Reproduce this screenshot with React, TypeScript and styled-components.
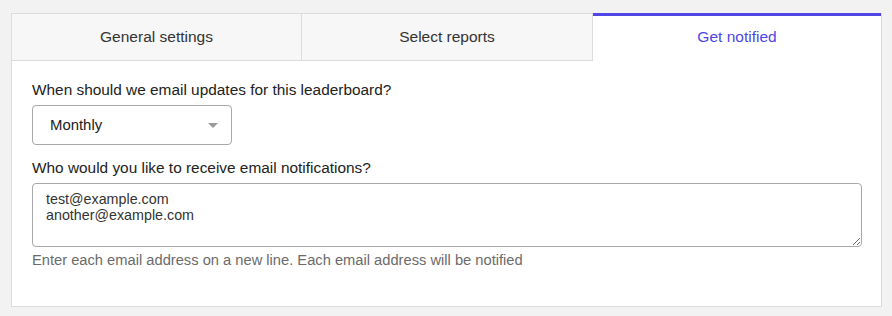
import React, { useState } from "react";
import styled, { createGlobalStyle } from "styled-components";

const Global = createGlobalStyle`
  html, body { margin: 0; padding: 0; background: #f1f2f1; }
  body { font-family: "Liberation Sans", Arial, sans-serif; }
  * { box-sizing: border-box; }
`;

const Page = styled.div`
  padding: 13px 10px 10px 11px;
`;

const Card = styled.div`
  background: #fff;
  border: 1px solid #dcdcdc;
  border-top: none;
`;

const Tabs = styled.div`
  display: grid;
  grid-template-columns: 290px 291px 1fr;
`;

const Tab = styled.button<{ $active?: boolean; $last?: boolean }>`
  height: 48px;
  border: none;
  border-top: ${(p) => (p.$active ? "3px solid #4f46e5" : "1px solid #dcdcdc")};
  border-bottom: ${(p) => (p.$active ? "1px solid transparent" : "1px solid #dcdcdc")};
  border-right: ${(p) => (p.$last ? "none" : "1px solid #dcdcdc")};
  background: ${(p) => (p.$active ? "#fff" : "#f7f7f7")};
  color: ${(p) => (p.$active ? "#4f46e5" : "#333")};
  font-family: inherit;
  font-size: 15.5px;
  padding: ${(p) => (p.$active ? "0 0 2px" : "0")};
  cursor: pointer;
`;

const Body = styled.div`
  padding: 20px 19px 38px 20px;
  display: flex;
  flex-direction: column;
`;

const Label = styled.label`
  font-size: 15.4px;
  color: #222;
  line-height: 18px;
  margin-bottom: 6px;
`;

const SelectBox = styled.div`
  position: relative;
  width: 200px;
  height: 40px;
  border: 1px solid #a8a8a8;
  border-radius: 4px;
  display: flex;
  align-items: center;
  padding: 0 17px;
  font-size: 14.9px;
  color: #222;
  margin-bottom: 14px;
`;

const Caret = styled.span`
  position: absolute;
  right: 13px;
  top: 17px;
  width: 0;
  height: 0;
  border-left: 5px solid transparent;
  border-right: 5px solid transparent;
  border-top: 5px solid #9a9a9a;
`;

const TextArea = styled.textarea`
  width: 100%;
  height: 64px;
  border: 1px solid #a8a8a8;
  border-radius: 4px;
  padding: 7px 13px;
  font-family: inherit;
  font-size: 14.3px;
  line-height: 16px;
  color: #333;
  resize: vertical;
  display: block;
`;

const Help = styled.div`
  font-size: 14.7px;
  color: #6b6b6b;
  margin-top: 5px;
`;

export default function App() {
  const [emails, setEmails] = useState("test@example.com\nanother@example.com");
  return (
    <>
      <Global />
      <Page>
        <Card>
          <Tabs>
            <Tab>General settings</Tab>
            <Tab>Select reports</Tab>
            <Tab $active $last>Get notified</Tab>
          </Tabs>
          <Body>
            <Label>When should we email updates for this leaderboard?</Label>
            <SelectBox>
              Monthly
              <Caret />
            </SelectBox>
            <Label>Who would you like to receive email notifications?</Label>
            <TextArea value={emails} onChange={(e) => setEmails(e.target.value)} />
            <Help>Enter each email address on a new line. Each email address will be notified</Help>
          </Body>
        </Card>
      </Page>
    </>
  );
}
